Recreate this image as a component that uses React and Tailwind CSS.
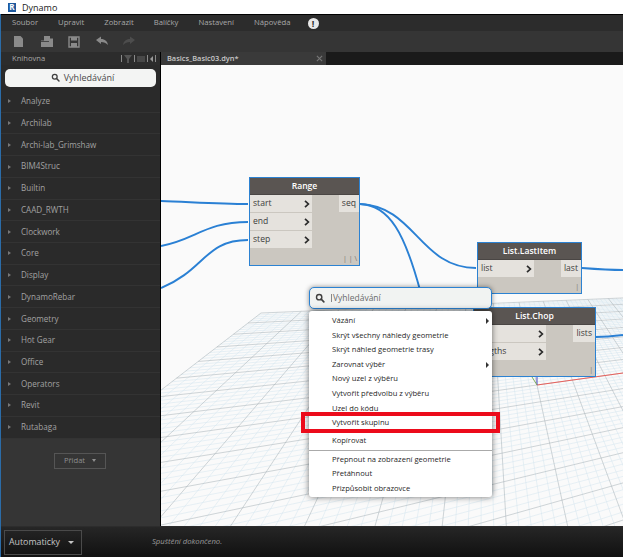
import React from "react";

const FONT = "font-['Open_Sans','Liberation_Sans',sans-serif]";

function SearchIcon({ className = "" }) {
  return (
    <svg viewBox="0 0 12 12" className={className}>
      <circle cx="5" cy="5" r="3.2" fill="none" stroke="#3f3f3f" strokeWidth="1.7" />
      <path d="M7.4 7.4 L10.6 10.6" stroke="#3f3f3f" strokeWidth="2" strokeLinecap="round" />
    </svg>
  );
}

function Chevron() {
  return (
    <svg viewBox="0 0 6 8" className="w-[6px] h-[8px]">
      <path d="M1 0.8 L4.4 4 L1 7.2" fill="none" stroke="#2b2b2b" strokeWidth="1.7" />
    </svg>
  );
}

const MENU = ["Soubor", "Upravit", "Zobrazit", "Balíčky", "Nastavení", "Nápověda"];
const LIB = ["Analyze", "Archilab", "Archi-lab_Grimshaw", "BIM4Struc", "Builtin", "CAAD_RWTH", "Clockwork", "Core", "Display", "DynamoRebar", "Geometry", "Hot Gear", "Office", "Operators", "Revit", "Rutabaga"];

function Grid() {
  const O = [537, 385], V2 = [1390, 266], V1 = [484, 141];
  const N = 40, s = 0.3458, t = 0.513;
  const P = (u, v) => {
    const a = (s * u) / N, b = (t * v) / N;
    const d = a + b + 1;
    return [(a * V2[0] + b * V1[0] + O[0]) / d, (a * V2[1] + b * V1[1] + O[1]) / d];
  };
  const lines = [];
  for (let i = -N; i <= N; i++) {
    const major = i % 5 === 0;
    const A = P(i, -N), B = P(i, N), C = P(-N, i), D = P(N, i);
    lines.push({ k: "a" + i, p: [A, B], major });
    lines.push({ k: "b" + i, p: [C, D], major });
  }
  lines.sort((x, y) => x.major - y.major);
  return (
    <g>
      {lines.map((l) => (
        <line key={l.k} x1={l.p[0][0]} y1={l.p[0][1]} x2={l.p[1][0]} y2={l.p[1][1]}
          stroke={l.major ? "#a9b4b9" : "#d2e4ee"} strokeWidth={l.major ? 0.55 : 0.5} />
      ))}
    </g>
  );
}

function Port({ label, arrow = true, w }) {
  return (
    <div className={`flex items-center justify-between h-[17px] mb-px bg-[#e5e2dd] pl-[3px] pr-[2px] ${w}`}>
      <span className="text-[8.6px] text-[#3c3c3c] leading-none">{label}</span>
      {arrow && <Chevron />}
    </div>
  );
}

function Node({ title, pos, inputs, output, inW, glyph }) {
  return (
    <div className={`absolute ${pos} border border-[#2c82d2] bg-[#cbc7c0] flex flex-col`}>
      <div className="h-[17px] shrink-0 bg-[#5a5552] text-white text-[8.6px] font-semibold flex items-center justify-center border-b border-[#4a4644]">{title}</div>
      <div className="flex justify-between flex-1">
        <div className="flex flex-col">
          {inputs.map((i) => <Port key={i} label={i} w={inW} />)}
        </div>
        <div>
          <div className="h-[17px] bg-[#e5e2dd] px-[3px] flex items-center text-[8.6px] text-[#3c3c3c] leading-none">{output}</div>
        </div>
      </div>
      <div className="absolute right-[2px] bottom-[1px] text-[7px] leading-[10px] text-[#77736d]">{glyph}</div>
    </div>
  );
}

function Item({ label, arrow, className = "h-[14.6px]" }) {
  return (
    <div className={`flex items-center justify-between pl-[23px] pr-[3px] ${className}`}>
      <span className="text-[7.6px] text-[#1f1f1f] leading-none whitespace-nowrap">{label}</span>
      {arrow && <span className="w-0 h-0 border-y-[3px] border-y-transparent border-l-[3px] border-l-[#333]" />}
    </div>
  );
}

export default function App() {
  return (
    <div className={`w-[623px] h-[557px] flex flex-col bg-[#333333] overflow-hidden ${FONT}`}>
      {/* title bar */}
      <div className="h-[14px] shrink-0 bg-white flex items-center pl-[8px] gap-[6px]">
        <div className="w-[8px] h-[9px] bg-[#1f5a9e] flex items-center justify-center text-white text-[8px] font-bold leading-none">R</div>
        <span className="text-[9px] text-[#222] leading-none">Dynamo</span>
      </div>

      <div className="flex-1 flex flex-col border-l border-[#2b6ca8] min-h-0">
        {/* menu */}
        <div className="h-[17px] shrink-0 bg-[#2c2c2c] border-t border-black flex items-center pl-[11px] text-[7.7px] text-[#a8a8a8]">
          <div className="flex gap-[20px] leading-none">
            {MENU.map((m) => <span key={m}>{m}</span>)}
          </div>
          <span className="ml-[17px] w-[11px] h-[11px] rounded-full bg-[#e8e8e8] text-[#2c2c2c] text-[9px] font-bold flex items-center justify-center leading-none">!</span>
        </div>

        {/* toolbar */}
        <div className="h-[21px] shrink-0 bg-[#353535] flex items-center pl-[11px] gap-[13.5px]">
          <svg viewBox="0 0 14 14" className="w-[14px] h-[14px]"><path d="M2 1 H8.5 L11 3.5 V12 H2 Z" fill="#8a8a8a" /></svg>
          <svg viewBox="0 0 14 14" className="w-[14px] h-[14px]"><path d="M4 1 H10 V3.5 H13 V12 H1 V5.5 H4 Z" fill="#8a8a8a" /><path d="M1 6.5 H9" stroke="#353535" strokeWidth="0.8" /></svg>
          <svg viewBox="0 0 14 14" className="w-[14px] h-[14px]"><path d="M2 2 H12 V12 H2 Z" fill="none" stroke="#8a8a8a" strokeWidth="1.4" /><path d="M4 2 H10 V5.5 H4 Z M4 8 H10 V12 H4 Z" fill="#8a8a8a" /></svg>
          <svg viewBox="0 0 14 14" className="w-[14px] h-[14px]"><path d="M1 5 L6 1.5 V4 C10 4 12.5 6.5 13 10 C11 8 9 7 6 7 V9 Z" fill="#8a8a8a" /></svg>
          <svg viewBox="0 0 14 14" className="w-[14px] h-[14px]"><path d="M13 5 L8 1.5 V4 C4 4 1.5 6.5 1 10 C3 8 5 7 8 7 V9 Z" fill="#4d4d4d" /></svg>
        </div>

        {/* main */}
        <div className="flex-1 flex min-h-0">
          {/* library */}
          <div className="w-[159px] shrink-0 flex flex-col bg-[#353535]">
            <div className="h-[13px] bg-[#2c2c2c] flex items-center justify-between pl-[11px] pr-[4px] text-[7.6px] text-[#a8a8a8] leading-none">
              <span>Knihovna</span>
              <div className="flex items-center gap-[2px] text-[#666]">
                <span className="w-px h-[7px] bg-[#8a8a8a]" />
                <svg viewBox="0 0 8 8" className="w-[8px] h-[8px]"><path d="M0 0 H8 L5 4 V8 H3 V4 Z" fill="#555" /></svg>
                <span className="w-px h-[7px] bg-[#8a8a8a]" />
                <span className="w-[8px] h-[6px] bg-[#484848]" />
                <span className="w-px h-[7px] bg-[#8a8a8a]" />
                <span className="w-0 h-0 border-y-[3px] border-y-transparent border-r-[3px] border-r-[#9a9a9a]" />
                <span className="w-px h-[7px] bg-[#8a8a8a]" />
              </div>
            </div>
            <div className="h-[26px] bg-[#2a2a2a] flex items-start pt-[3.5px] px-[4px]">
              <div className="h-[18px] w-[151px] rounded-[5px] bg-[#f3f4f3] flex items-center justify-center gap-[4px] pl-[4px]">
                <SearchIcon className="w-[9px] h-[9px]" />
                <span className="text-[9px] text-[#4a4a4a] leading-none">Vyhledávání</span>
              </div>
            </div>
            <div className="flex flex-col">
              {LIB.map((l) => (
                <div key={l} className="h-[21.73px] bg-[#2a2a2a] border-b border-[#333] flex items-center pl-[7px] gap-[10px]">
                  <span className="w-0 h-0 border-y-[2.5px] border-y-transparent border-l-[3.5px] border-l-[#777]" />
                  <span className="text-[8.1px] text-[#a2a2a2] leading-none">{l}</span>
                </div>
              ))}
            </div>
            <div className="flex justify-center pt-[14px] pr-[1px]">
              <div className="w-[52px] h-[16px] border border-[#555] flex items-center justify-center gap-[7px]">
                <span className="text-[7.6px] text-[#8f8f8f] leading-none">Přidat</span>
                <span className="w-0 h-0 border-x-[2px] border-x-transparent border-t-[3px] border-t-[#8f8f8f]" />
              </div>
            </div>
          </div>

          {/* workspace */}
          <div className="flex-1 flex flex-col min-w-0 border-l border-black">
            <div className="h-[13px] shrink-0 flex bg-[#1a1a1a]">
              <div className="w-[165px] bg-[#3a3a3a] flex items-center justify-between pl-[6px] pr-[3px]">
                <span className="text-[7.4px] font-semibold text-[#c8c8c8] leading-none">Basics_Basic03.dyn*</span>
                <svg viewBox="0 0 8 8" className="w-[7px] h-[7px]"><path d="M1 1 L7 7 M7 1 L1 7" stroke="#777" strokeWidth="1.3" /></svg>
              </div>
            </div>
            <div className="relative flex-1 bg-[#fafafa] overflow-hidden">
              <svg viewBox="161 65 462 461" className="absolute inset-0 w-[462px] h-[461px]">
                <Grid />
                <path d="M537 385 L623 373" stroke="#e8605c" strokeWidth="1" />
                <path d="M537 385 L537 375" stroke="#4a44c0" strokeWidth="1" />
                <path d="M537 385 L532 377" stroke="#7fae5a" strokeWidth="1" />
                <g fill="none" stroke="#2a80d4" strokeWidth="1.9">
                  <path d="M161 201 C190 202 220 204 248 204" />
                  <path d="M161 246 C195 240 205 222 248 222" />
                  <path d="M161 288 C205 270 205 240 248 240" />
                  <path d="M360 204 C415 206 420 268 476 268" />
                  <path d="M360 204 C390 205 405 235 420 290" />
                  <path d="M582 268 C595 269 610 270 623 270" />
                  <path d="M596 337 C605 337 615 336 623 335" />
                </g>
              </svg>

              <Node title="Range" pos="left-[88px] top-[112px] w-[111px] h-[89px]" inputs={["start", "end", "step"]} output="seq" inW="w-[62px]" glyph="| | \" />
              <Node title="List.LastItem" pos="left-[316px] top-[177px] w-[105px] h-[52px]" inputs={["list"]} output="last" inW="w-[56px]" glyph="|" />
              <Node title="List.Chop" pos="left-[312px] top-[242px] w-[123px] h-[70px]" inputs={["list", "lengths"]} output="lists" inW="w-[72px]" glyph="|" />

              {/* canvas search */}
              <div className="absolute left-[148px] top-[222px] w-[183px] h-[22px] rounded-[5px] border border-[#2c82d2] bg-[#f1f3f2] flex items-center pl-[5px] gap-[6px] shadow-[0_0_5px_rgba(0,0,0,0.45)]">
                <SearchIcon className="w-[10px] h-[10px]" />
                <span className="text-[8.5px] text-[#6a6a6a] leading-none border-l border-[#888] pl-[1px]">Vyhledávání</span>
              </div>

              {/* context menu */}
              <div className="absolute left-[148px] top-[246px] w-[183px] h-[186px] rounded-[3px] bg-white flex flex-col pt-[2.5px] shadow-[0_0_6px_rgba(0,0,0,0.55)]">
                <Item label="Vázání" arrow />
                <Item label="Skrýt všechny náhledy geometrie" />
                <Item label="Skrýt náhled geometrie trasy" />
                <Item label="Zarovnat výběr" arrow />
                <Item label="Nový uzel z výběru" />
                <Item label="Vytvořit předvolbu z výběru" />
                <Item label="Uzel do kódu" />
                <Item label="Vytvořit skupinu" />
                <Item label="Kopírovat" className="h-[17px] mt-[2px]" />
                <div className="h-px bg-[#aaaaaa] mb-[1px] mt-[1px]" />
                <Item label="Přepnout na zobrazení geometrie" />
                <Item label="Přetáhnout" />
                <Item label="Přizpůsobit obrazovce" />
              </div>

              {/* highlight */}
              <div className="absolute left-[140px] top-[347px] w-[199px] h-[21px] border-[4px] border-[#ec0b1b]" />
            </div>
          </div>
        </div>

        {/* bottom */}
        <div className="h-[31px] shrink-0 bg-gradient-to-b from-[#262626] to-[#111111] border-t border-[#2c2c2c] flex items-center pl-[3px]">
          <div className="w-[78px] h-[25px] border border-[#4a4a4a] flex items-center justify-between pl-[4px] pr-[7px]">
            <span className="text-[8.8px] text-[#c4c4c4] leading-none">Automaticky</span>
            <span className="w-0 h-0 border-x-[3px] border-x-transparent border-t-[3px] border-t-[#c4c4c4]" />
          </div>
          <span className="ml-[70px] text-[7.7px] italic text-[#9a9a9a] leading-none">Spuštění dokončeno.</span>
        </div>
      </div>
    </div>
  );
}
